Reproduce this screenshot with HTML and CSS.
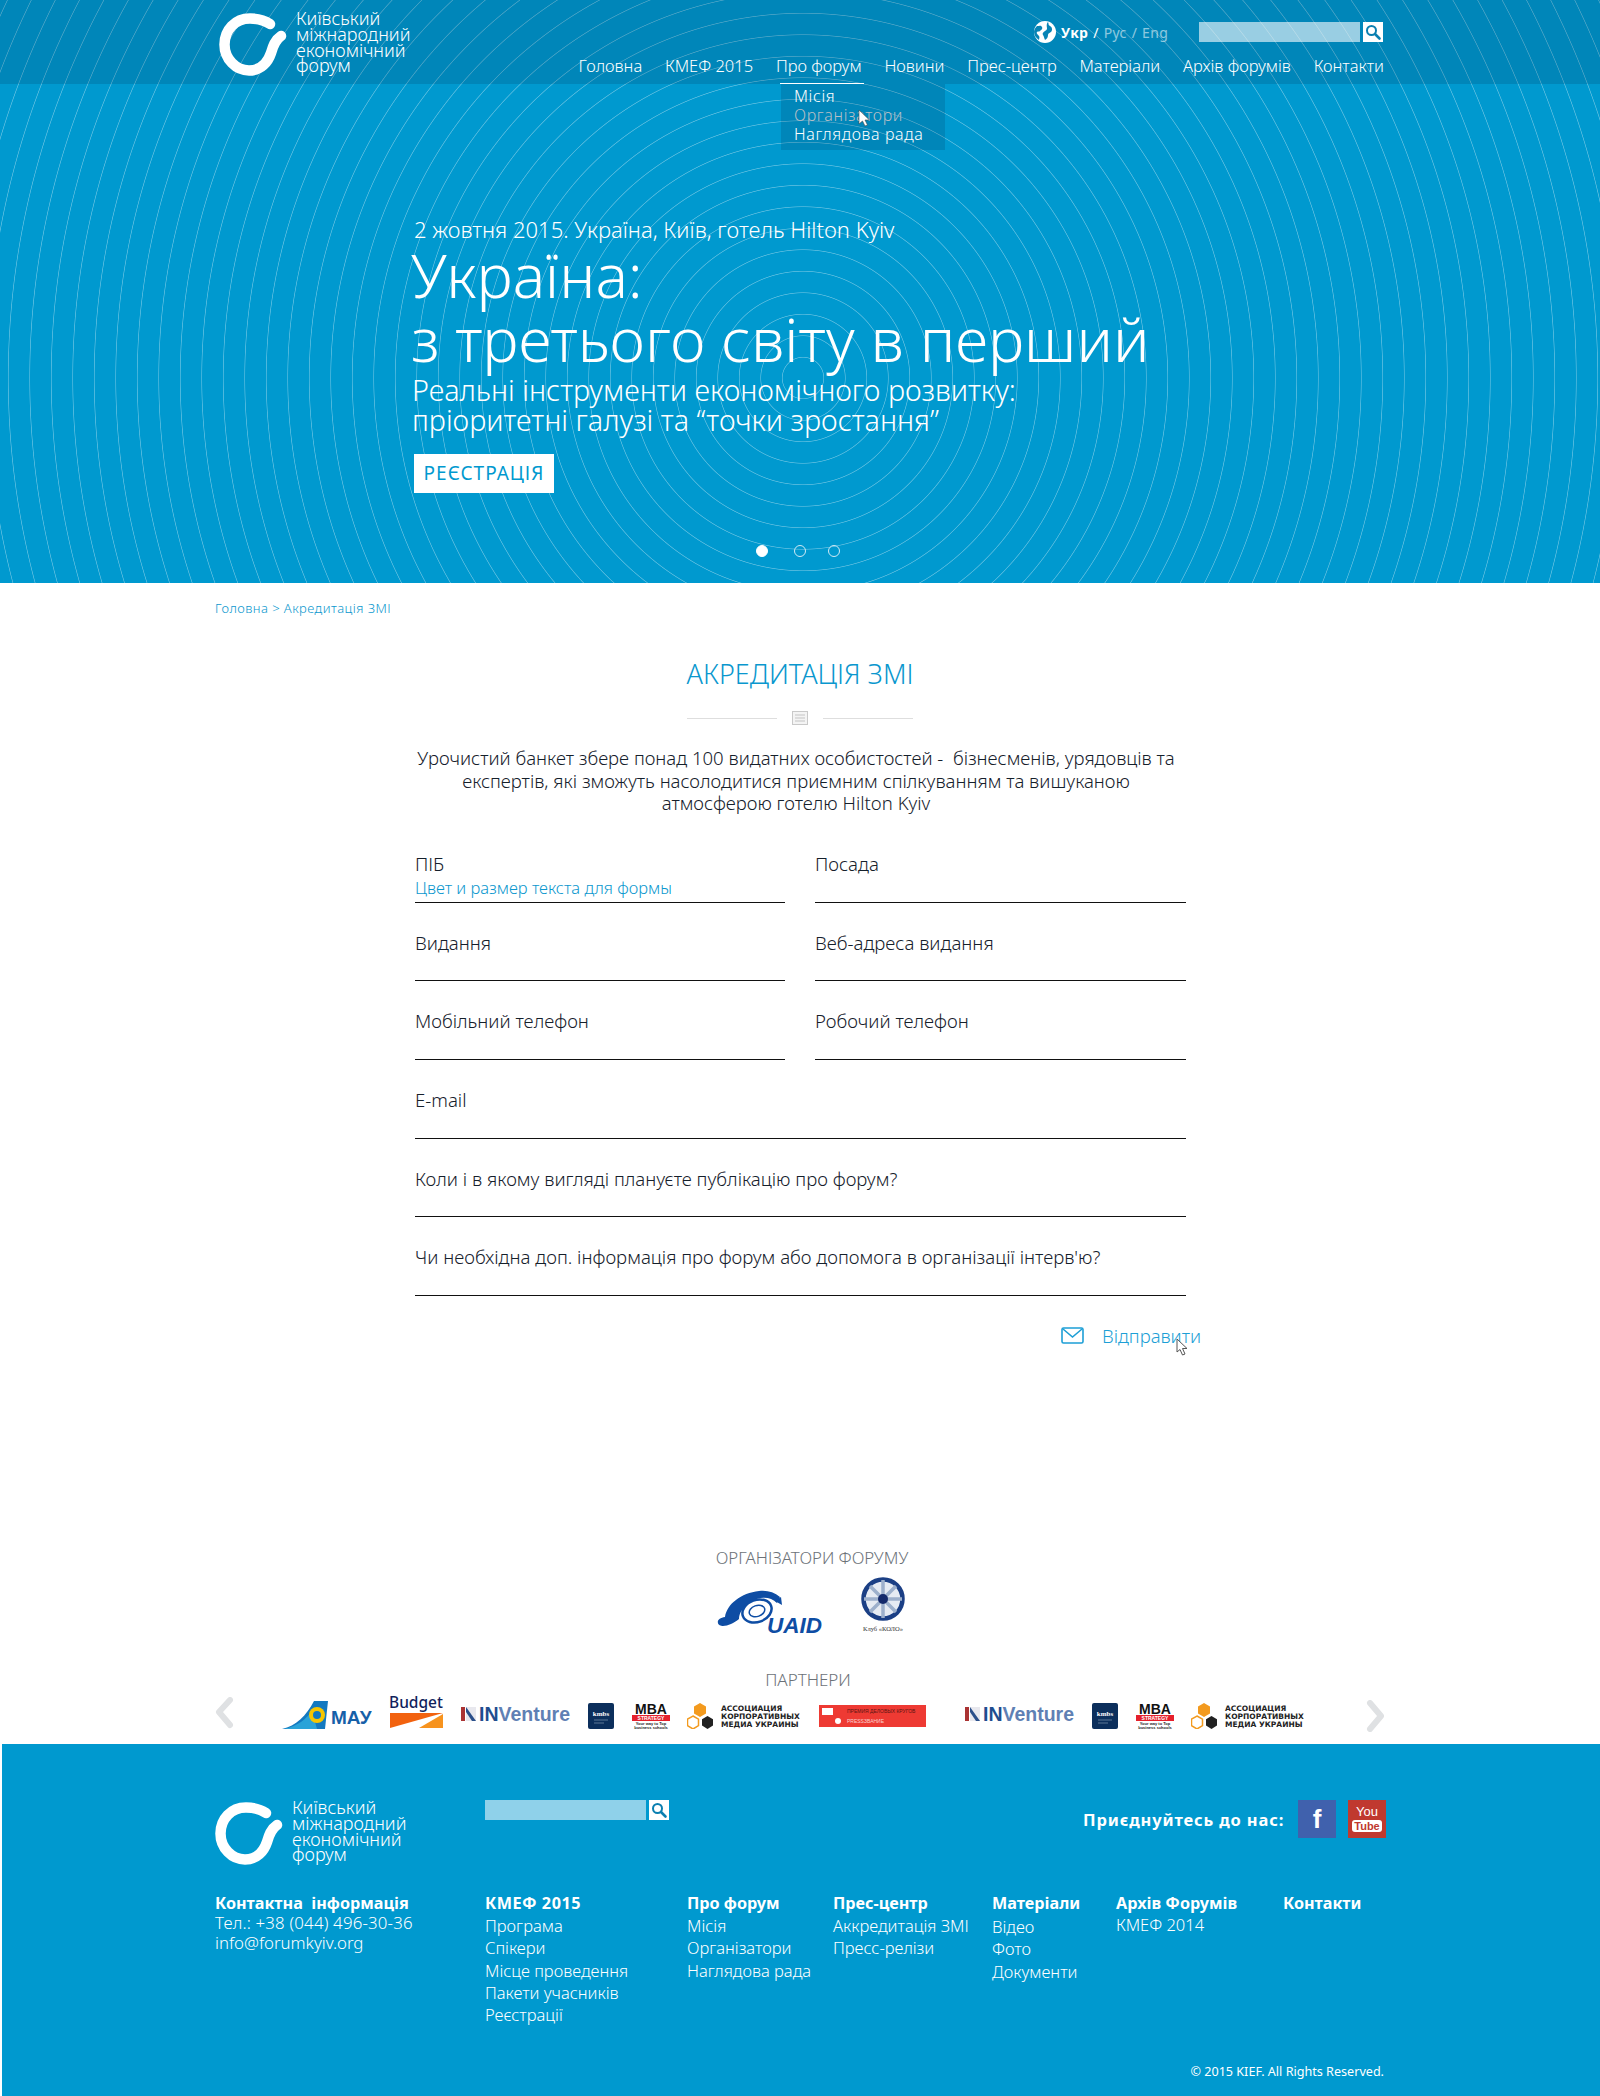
FILE: index.html
```html
<!DOCTYPE html>
<html lang="uk">
<head>
<meta charset="utf-8">
<title>Акредитація ЗМІ</title>
<link rel="stylesheet" href="styles.css">
</head>
<body>
<svg class="defs" width="0" height="0">
  <defs>
    <symbol id="ring" viewBox="0 0 68 63">
      <path d="M51 11C45 7 38 5.500 31 5.500C16 5.500 5.500 17 5.500 31.500C5.500 46 17 57.500 30 57.500C42 57.500 49 49 52 40C54 33 56 27 62 23" fill="none" stroke="#fff" stroke-width="10.500" stroke-linecap="round"/>
    </symbol>
    <symbol id="lens" viewBox="0 0 20 20">
      <circle cx="8.500" cy="8.500" r="4.500" fill="none" stroke="#0b7fb0" stroke-width="2"/>
      <path d="M12 12l4.500 4.500" stroke="#0b7fb0" stroke-width="2.600" stroke-linecap="round"/>
    </symbol>
    <symbol id="inv" viewBox="0 0 110 16">
      <rect x="0" y="1" width="4" height="14" fill="#a33"/>
      <rect x="5" y="1" width="10" height="14" fill="#e8e8ee"/>
      <path d="M5 1l10 14h-4L5 6z" fill="#2a4f8a"/>
      <text x="18" y="15" class="inv-text"><tspan fill="#1f4d8f">IN</tspan><tspan fill="#5f80b4">Venture</tspan></text>
    </symbol>
    <symbol id="kmbs" viewBox="0 0 26 26">
      <rect width="26" height="26" rx="2" fill="#0c2f5c"/>
      <text x="13" y="13" text-anchor="middle" class="kmbs-text">kmbs</text>
      <path d="M6 17h14M6 20h10" stroke="#5d7896" stroke-width="1"/>
    </symbol>
    <symbol id="mba" viewBox="0 0 38 26">
      <text x="19" y="11" text-anchor="middle" class="mba-text">MBA</text>
      <rect x="0" y="12" width="38" height="6" fill="#e5202c"/>
      <text x="19" y="17" text-anchor="middle" class="mba-sub">STRATEGY</text>
      <text x="19" y="22" text-anchor="middle" class="mba-tiny">Your way to Top</text>
      <text x="19" y="26" text-anchor="middle" class="mba-tiny">business schools</text>
    </symbol>
    <symbol id="assoc" viewBox="0 0 114 26">
      <path d="M13 0l6 3.500v7l-6 3.500-6-3.500v-7z" fill="#f39a1e"/>
      <path d="M6 13l5.500 3.200v6.400L6 26 .5 22.600v-6.400z" fill="none" stroke="#f39a1e" stroke-width="1.500"/>
      <path d="M20.500 13l5.500 3.200v6.400L20.500 26 15 22.600v-6.400z" fill="#222"/>
      <text x="34" y="8" class="assoc-text">АССОЦИАЦИЯ</text>
      <text x="34" y="16" class="assoc-text">КОРПОРАТИВНЫХ</text>
      <text x="34" y="24" class="assoc-text">МЕДИА УКРАИНЫ</text>
    </symbol>
  </defs>
</svg>

<section class="hero">
  <header class="topbar">
    <div class="wrap topbar-inner">
      <a class="brand">
        <svg class="brand-ring"><use href="#ring"/></svg>
        <span class="brand-name">Київський<br>міжнародний<br>економічний<br>форум</span>
      </a>
      <div class="top-right">
        <div class="tools">
          <svg class="globe" viewBox="0 0 22 22">
            <circle cx="11" cy="11" r="11" fill="#fff"/>
            <path d="M3 5c2 0 4-1 5 1s-1 3-2 4-2 0-3 1 1 3 2 4 0 3 0 4c-3-2-5-5-5-8 0-2 1-4 3-6zM14 1c1 2 0 3 2 4s3 4 1 6c-1 1-3 1-3 3s-1 4-3 5c-1-2-1-4-2-5s0-3 2-4 2-2 2-3-1-4 1-6z" fill="#0784b5"/>
          </svg>
          <div class="langs"><b>Укр</b> <span class="sep">/</span> <span class="dim">Рус / Eng</span></div>
          <form class="search">
            <span class="search-field"></span>
            <span class="search-btn"><svg class="lens"><use href="#lens"/></svg></span>
          </form>
        </div>
        <nav class="mainnav">
          <a>Головна</a><a>КМЕФ 2015</a><a class="active">Про форум</a><a>Новини</a><a>Прес-центр</a><a>Матеріали</a><a>Архів форумів</a><a>Контакти</a>
          <div class="submenu">
            <a>Місія</a>
            <a class="hover">Організатори</a>
            <a>Наглядова рада</a>
            <svg class="cursor-white" viewBox="0 0 11 18"><path d="M1 1v14l3.500-3 2.500 5 2.500-1-2.500-5h4.500z" fill="#fff" stroke="#444" stroke-width=".6"/></svg>
          </div>
        </nav>
      </div>
    </div>
  </header>
  <div class="hero-body">
    <p class="hero-date">2 жовтня 2015. Україна, Київ, готель Hilton Kyiv</p>
    <h1 class="hero-title">Україна:<br>з третього світу в перший</h1>
    <p class="hero-sub">Реальні інструменти економічного розвитку:<br>пріоритетні галузі та “точки зростання”</p>
    <a class="hero-btn">РЕЄСТРАЦІЯ</a>
  </div>
  <div class="dots"><i class="on"></i><i class="d2"></i><i class="d3"></i></div>
</section>

<main class="content">
  <div class="wrap crumbs">Головна &gt; Акредитація ЗМІ</div>
  <h2 class="page-title">АКРЕДИТАЦІЯ ЗМІ</h2>
  <div class="divider">
    <span class="rule"></span>
    <svg class="doc" viewBox="0 0 16 14"><rect x=".5" y=".5" width="15" height="13" fill="#f4f4f4" stroke="#c9c9c9"/><path d="M3 4h10M3 7h10M3 10h10" stroke="#c4c4c4"/></svg>
    <span class="rule"></span>
  </div>
  <p class="lead">Урочистий банкет збере понад 100 видатних особистостей - &nbsp;бізнесменів, урядовців та експертів, які зможуть насолодитися приємним спілкуванням та вишуканою атмосферою готелю Hilton Kyiv</p>
  <form class="form">
    <div class="field first"><span>ПІБ</span><em>Цвет и размер текста для формы</em></div>
    <div class="field first"><span>Посада</span></div>
    <div class="field short"><span>Видання</span></div>
    <div class="field short"><span>Веб-адреса видання</span></div>
    <div class="field"><span>Мобільний телефон</span></div>
    <div class="field"><span>Робочий телефон</span></div>
    <div class="field wide"><span>E-mail</span></div>
    <div class="field wide short"><span>Коли і в якому вигляді плануєте публікацію про форум?</span></div>
    <div class="field wide"><span>Чи необхідна доп. інформація про форум або допомога в організації інтерв'ю?</span></div>
  </form>
  <div class="send">
    <svg class="mail" viewBox="0 0 23 17"><rect x="1" y="1" width="21" height="15" rx="1.500" fill="none" stroke="#1d9fd6" stroke-width="1.600"/><path d="M2 2l9.500 8L21 2" fill="none" stroke="#1d9fd6" stroke-width="1.600"/></svg>
    <a>Відправити</a>
    <svg class="cursor-dark" viewBox="0 0 12 18"><path d="M1 1v13l3-2.500 2.500 5.500 2.500-1-2.500-5.500H11z" fill="#fff" stroke="#555"/></svg>
  </div>

  <h3 class="logos-title organizers">ОРГАНІЗАТОРИ ФОРУМУ</h3>
  <div class="org-logos">
    <svg class="uaid" viewBox="0 0 116 44">
      <path d="M1 33c-1-3 2-5 7-6C10 14 24 3 42 1c8-1 15 1 21 6l-3 6C53 6 42 6 32 13c-7 5-10 11-10 16-5 4-11 7-16 7-2 0-5-1-5-3z" fill="#0e4da4"/>
      <path d="M58 11l6-4 1 8z" fill="#0e4da4"/>
      <ellipse cx="40" cy="21" rx="15" ry="11" transform="rotate(-20 40 21)" fill="none" stroke="#0e4da4" stroke-width="2.500"/>
      <ellipse cx="40" cy="21" rx="8" ry="5.500" transform="rotate(-20 40 21)" fill="none" stroke="#0e4da4" stroke-width="1.500"/>
      <text x="50" y="43" class="uaid-text">UAID</text>
    </svg>
    <svg class="kolo" viewBox="0 0 48 56">
      <circle cx="24" cy="22" r="19.500" fill="#e6ebf3" stroke="#1b3f85" stroke-width="4.500"/>
      <path d="M24 22V3M24 22l13-13M24 22h19M24 22l13 13M24 22v19M24 22L11 35M24 22H5M24 22L11 9" stroke="#9db0cc" stroke-width="3.500"/>
      <circle cx="24" cy="22" r="5" fill="#14296b"/>
      <text x="24" y="54" text-anchor="middle" class="kolo-text">Клуб «КОЛО»</text>
    </svg>
  </div>

  <h3 class="logos-title partners">ПАРТНЕРИ</h3>
  <div class="wrap carousel">
    <svg class="chev" viewBox="0 0 20 32"><path d="M16 3L5 15l11 13" fill="none" stroke="#dfe1e3" stroke-width="6" stroke-linecap="round" stroke-linejoin="round"/></svg>
    <div class="logo-row">
      <svg class="mau" viewBox="0 0 90 30">
        <path d="M0 29C14 26 24 16 32 1h14l-3 28z" fill="#1379c0"/>
        <path d="M2 29c14-3 22-10 28-18l5 18z" fill="#2aa3d8"/>
        <circle cx="35" cy="15" r="8" fill="#f7c600"/>
        <circle cx="35" cy="15" r="4" fill="#1379c0"/>
        <text x="49" y="24" class="mau-text">МАУ</text>
      </svg>
      <svg class="budget" viewBox="0 0 57 34">
        <text x="0" y="14" class="budget-text">Budget</text>
        <path d="M1 19h53L1 34z" fill="#f2620f"/>
        <path d="M30 34l24-14v14z" fill="#f7931e"/>
      </svg>
      <svg class="inv"><use href="#inv"/></svg>
      <svg class="kmbs"><use href="#kmbs"/></svg>
      <svg class="mba"><use href="#mba"/></svg>
      <svg class="assoc"><use href="#assoc"/></svg>
      <svg class="press" viewBox="0 0 107 22">
        <rect width="107" height="22" fill="#ee3a33"/>
        <rect x="3" y="3" width="11" height="7" fill="#fff"/>
        <circle cx="19" cy="16" r="3" fill="#fff"/>
        <text x="28" y="8" class="press-text">ПРЕМИЯ ДЕЛОВЫХ КРУГОВ</text>
        <text x="28" y="18" class="press-sub">PRESSЗВАНИЕ</text>
      </svg>
      <svg class="inv two"><use href="#inv"/></svg>
      <svg class="kmbs"><use href="#kmbs"/></svg>
      <svg class="mba"><use href="#mba"/></svg>
      <svg class="assoc"><use href="#assoc"/></svg>
    </div>
    <svg class="chev right" viewBox="0 0 20 32"><path d="M4 3l11 13L4 29" fill="none" stroke="#dfe1e3" stroke-width="6" stroke-linecap="round" stroke-linejoin="round"/></svg>
  </div>
</main>

<footer class="footer">
  <div class="wrap foot-top">
    <a class="brand">
      <svg class="brand-ring"><use href="#ring"/></svg>
      <span class="brand-name">Київський<br>міжнародний<br>економічний<br>форум</span>
    </a>
    <form class="search foot-search">
      <span class="search-field solid"></span>
      <span class="search-btn"><svg class="lens"><use href="#lens"/></svg></span>
    </form>
    <div class="social">
      <span class="join">Приєднуйтесь до нас:</span>
      <span class="soc fb">f</span>
      <span class="soc yt"><b>You</b><i>Tube</i></span>
    </div>
  </div>
  <div class="wrap foot-cols">
    <div class="col c-contact"><h4>Контактна &nbsp;інформація</h4><p class="tel">Тел.: +38 (044) 496-30-36</p><p>info@forumkyiv.org</p></div>
    <div class="col c-kief"><h4>КМЕФ 2015</h4><a>Програма</a><a>Спікери</a><a>Місце проведення</a><a>Пакети учасників</a><a>Реєстрації</a></div>
    <div class="col c-about"><h4>Про форум</h4><a>Місія</a><a>Організатори</a><a>Наглядова рада</a></div>
    <div class="col c-press"><h4>Прес-центр</h4><a>Аккредитація ЗМІ</a><a>Пресс-релізи</a></div>
    <div class="col c-mat"><h4>Матеріали</h4><a>Відео</a><a>Фото</a><a>Документи</a></div>
    <div class="col c-arch"><h4>Архів Форумів</h4><a>КМЕФ 2014</a></div>
    <div class="col c-cont"><h4>Контакти</h4></div>
  </div>
  <div class="wrap copyright">© 2015 KIEF. All Rights Reserved.</div>
</footer>
</body>
</html>
```

FILE: styles.css
```css
* { box-sizing: border-box; }
html, body { margin: 0; padding: 0; }
body { font-family: "Noto Sans", "Open Sans", sans-serif; font-weight: 300; color: #15202b; background: #fff; width: 1600px; overflow-x: hidden; }
a { color: inherit; text-decoration: none; }
h1, h2, h3, h4, p { margin: 0; font-weight: inherit; }
.defs { position: absolute; }
.wrap { width: 1170px; margin-left: 215px; }

.hero { height: 583px; position: relative; color: #fff; background-color: #0099cf;
  background-image: repeating-radial-gradient(circle at 803px 378px, rgba(255,255,255,0) 0, rgba(255,255,255,0) 20px, rgba(255,255,255,.3) 20.6px, rgba(255,255,255,.3) 20.9px, rgba(255,255,255,0) 21.5px); }
.topbar { height: 84px; background: rgba(0,40,80,.17); }
.topbar-inner { display: flex; justify-content: space-between; height: 84px; }
.brand { display: flex; width: 200px; }
.brand-ring { width: 68px; height: 63px; margin-top: 13px; margin-left: 4px; flex: none; }
.brand-name { margin-left: 9px; margin-top: 11px; font-size: 18px; line-height: 15.800px; font-weight: 300; }
.top-right { width: 810px; position: relative; }
.tools { display: flex; align-items: center; justify-content: flex-end; height: 64px; margin-right: 2px; }
.globe { width: 22px; height: 22px; margin-right: 5px; margin-top: -1px; }
.langs { font-size: 14px; width: 138px; font-weight: 400; letter-spacing: .3px; word-spacing: 1px; }
.langs .dim { opacity: .55; }
.search { display: flex; }
.search-field { display: block; width: 161px; height: 20px; background: rgba(255,255,255,.6); }
.search-field.solid { background: #8fd1ea; }
.search-btn { display: block; width: 20px; height: 20px; margin-left: 3px; background: #fff; }
.lens { width: 20px; height: 20px; display: block; }
.mainnav { display: flex; justify-content: flex-end; gap: 22.800px; font-size: 16.500px; position: relative; margin-right: 1px; margin-top: -10px; line-height: 24px; }
.mainnav > a { white-space: nowrap; }
.submenu { position: absolute; left: 206px; top: 30px; width: 164px; height: 66px; background: rgba(0,40,80,.17); padding: 3px 13px; display: flex; flex-direction: column; font-size: 16px; line-height: 19px; letter-spacing: .65px; }
.submenu::before { content: ""; position: absolute; left: -1px; top: -1px; width: 84px; height: 1px; background: #fff; }
.submenu .hover { color: #b9bfc6; }
.cursor-white { position: absolute; left: 77px; top: 25px; width: 11px; height: 18px; }

.hero-body { margin-left: 412px; margin-top: 130px; }
.hero-date { font-size: 22px; line-height: 30px; margin-left: 2px; }
.hero-title { font-size: 60.900px; line-height: 64px; margin: -1px 0 0 -1px; }
.hero-sub { font-size: 28.800px; line-height: 30px; margin-top: 4px; }
.hero-btn { display: block; width: 140px; height: 39px; margin: 19px 0 0 2px; background: #fff; color: #0099cf; font-size: 19px; line-height: 39px; letter-spacing: 1px; text-align: center; font-weight: 400; }
.dots { position: absolute; top: 545px; left: 756px; }
.dots i { position: absolute; top: 0; width: 12px; height: 12px; border-radius: 50%; border: 1px solid #cfeaf5; }
.dots .on { left: 0; background: #fff; border-color: #fff; }
.dots .d2 { left: 38px; }
.dots .d3 { left: 72px; }

.content { height: 1161px; text-align: center; }
.crumbs { text-align: left; font-size: 13px; letter-spacing: .45px; color: #0a97ce; line-height: 20px; padding-top: 15px; height: 35px; font-weight: 300; }
.page-title { color: #0a97ce; font-size: 27px; line-height: 38px; margin-top: 37px; }
.divider { display: flex; justify-content: center; align-items: center; gap: 15px; margin-top: 17px; height: 16px; }
.rule { width: 90px; height: 1px; background: #dedede; }
.doc { width: 16px; height: 14px; }
.lead { width: 770px; height: 68px; margin: 21px 0 0 411px; font-size: 18.550px; line-height: 22.500px; }
.form { display: grid; grid-template-columns: 370px 371px; column-gap: 30px; width: 771px; margin: 26px 0 0 415px; text-align: left; }
.field { height: 79px; border-bottom: 1px solid #111; padding-top: 28px; font-size: 18.600px; line-height: 24px; display: flex; flex-direction: column; }
.field.short { height: 78px; }
.field.first { height: 62px; padding-top: 11px; }
.field em { font-style: normal; color: #0a97ce; font-size: 16.500px; line-height: 22px; margin-top: 1px; }
.field.wide { grid-column: 1 / -1; }
.send { position: relative; display: flex; align-items: center; height: 24px; margin: 27px 0 0 1061px; color: #1d9fd6; font-size: 18.500px; }
.mail { width: 23px; height: 17px; margin-right: 18px; }
.cursor-dark { position: absolute; left: 115px; top: 15px; width: 12px; height: 18px; }
.logos-title { font-size: 17px; color: #6c7278; line-height: 22px; }
.organizers { margin-top: 200px; padding-left: 24px; font-size: 16.800px; }
.org-logos { display: flex; margin: 21px 0 0 717px; height: 56px; }
.uaid { width: 116px; height: 44px; }
.kolo { width: 48px; height: 56px; margin-left: 26px; margin-top: -13px; }
.partners { margin-top: 23px; padding-left: 16px; }
.carousel { display: flex; position: relative; height: 50px; align-items: flex-start; margin-left: 214px; }
.chev { width: 20px; height: 32px; flex: none; margin-top: 6px; }
.chev.right { position: absolute; left: 1152px; margin-top: 9px; }
.logo-row { display: flex; align-items: flex-start; padding-left: 48px; padding-top: 5px; }
.mau { width: 90px; height: 30px; margin-top: 4px; }
.budget { width: 57px; height: 34px; margin: -2px 0 0 17px; }
.inv { width: 110px; height: 16px; margin: 10px 0 0 15px; }
.inv.two { margin-left: 39px; }
.kmbs { width: 26px; height: 26px; margin: 7px 0 0 17px; }
.mba { width: 38px; height: 26px; margin: 7px 0 0 18px; }
.assoc { width: 114px; height: 26px; margin: 7px 0 0 17px; }
.press { width: 107px; height: 22px; margin: 9px 0 0 18px; }
.inv-text { font: 700 19.500px "Liberation Sans", sans-serif; }
.kmbs-text { font: 700 7px "Liberation Serif", serif; fill: #fff; }
.mba-text { font: 900 14px "Liberation Sans", sans-serif; fill: #111; }
.mba-sub { font: 700 5px "Liberation Sans", sans-serif; fill: #fff; }
.mba-tiny { font: 700 4px "Liberation Sans", sans-serif; fill: #222; }
.assoc-text { font: 700 7.500px "DejaVu Sans", sans-serif; fill: #222; }
.press-text { font: 400 5px "Liberation Sans", sans-serif; fill: #5b1512; }
.press-sub { font: 400 5px "Liberation Sans", sans-serif; fill: #fbd3d1; }
.uaid-text { font: italic 900 22.500px "Liberation Sans", sans-serif; fill: #0e4da4; }
.kolo-text { font: 400 6.500px "Liberation Serif", serif; fill: #333; }
.mau-text { font: 700 19px "Liberation Sans", sans-serif; fill: #1660a8; }
.budget-text { font: 500 15.500px "Noto Sans", sans-serif; fill: #111f5c; }

.footer { margin-left: 2px; height: 352px; background: #0099cf; color: #fff; position: relative; }
.footer .wrap { margin-left: 213px; }
.foot-top { display: flex; height: 148px; padding-top: 56px; position: relative; }
.foot-top .brand-ring { margin: 2px 0 0; }
.foot-top .brand-name { margin-top: 0; margin-left: 9px; }
.foot-top .brand { width: 270px; }
.social { display: flex; align-items: center; position: absolute; left: 868px; top: 56px; height: 38px; }
.join { font-size: 16.500px; font-weight: 700; letter-spacing: .85px; white-space: nowrap; width: 215px; }
.soc { width: 38px; height: 38px; display: block; text-align: center; }
.fb { background: #4061ad; font: 700 26px/38px "Liberation Sans", sans-serif; }
.yt { background: #c0392f; margin-left: 12px; line-height: 13px; font-family: "Liberation Sans", sans-serif; padding-top: 5px; }
.yt b { display: block; font-size: 13px; }
.yt i { font-style: normal; font-size: 11px; font-weight: 700; background: #fff; color: #c0392f; border-radius: 3px; padding: 0 2px; }
.foot-cols { display: grid; grid-template-columns: 270px 202px 146px 159px 124px 167px 100px; height: 170px; font-size: 16.500px; }
.col h4 { font-size: 16.200px; font-weight: 700; line-height: 22px; }
.col a { display: block; line-height: 22.300px; }
.col p { line-height: 20px; font-size: 16.800px; }
.col .tel { letter-spacing: .2px; margin-top: -1px; }
.c-mat a { position: relative; top: 2px; }
.c-kief h4 { letter-spacing: .5px; }
.c-kief h4, .c-about h4, .c-press h4 { margin-bottom: 1px; }
.copyright { text-align: right; font-size: 12.600px; padding-right: 1px; line-height: 20px; font-weight: 400; width: 1170px; }
```
